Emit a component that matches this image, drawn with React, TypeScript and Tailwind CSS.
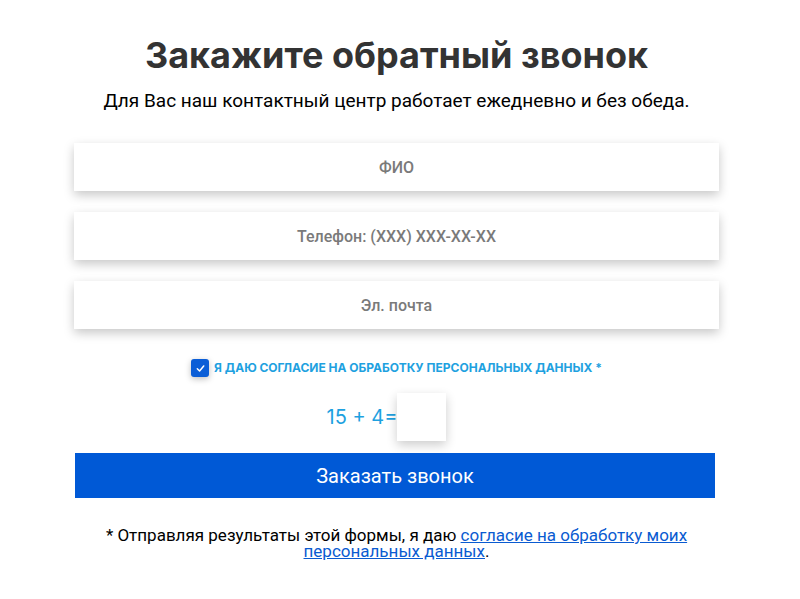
export default function App() {
  return (
    <div className="min-h-[599px] bg-white">
      <div className="mx-0 flex w-[793px] flex-col items-center pt-[33px]">
        <h1 className="text-[36px] font-bold leading-[44px] text-[#333333] [font-family:Inter,'Noto_Sans',sans-serif]">
          Закажите обратный звонок
        </h1>
        <p className="mt-[12px] text-[19px] leading-[24px] text-black [font-family:Roboto,'Noto_Sans',sans-serif]">
          Для Вас наш контактный центр работает ежедневно и без обеда.
        </p>

        <form className="mt-[30px] flex w-[645px] flex-col gap-[21px]">
          {["ФИО", "Телефон: (XXX) XXX-XX-XX", "Эл. почта"].map((ph) => (
            <input
              key={ph}
              placeholder={ph}
              className="h-[48px] w-full bg-white text-center text-[16px] font-medium text-[#555] shadow-[0_4px_10px_rgba(0,0,0,0.22)] outline-none placeholder:text-[#7a7a7a] [font-family:Roboto,sans-serif]"
            />
          ))}
        </form>

        <label className="mt-[30px] flex items-center gap-[5px]">
          <span className="flex h-[18px] w-[18px] items-center justify-center rounded-[3px] bg-[#0b5ed7] shadow-[0_2px_6px_rgba(0,0,0,0.25)]">
            <svg width="11" height="11" viewBox="0 0 12 12" fill="none">
              <path d="M2.5 6.3L5 8.8L9.5 3.2" stroke="white" strokeWidth="1.6" strokeLinecap="round" strokeLinejoin="round" />
            </svg>
          </span>
          <span className="text-[12px] font-bold uppercase leading-none text-[#1ea1e0] [font-family:Inter,sans-serif]">
            Я даю согласие на обработку персональных данных *
          </span>
        </label>

        <div className="mr-[20px] mt-[16px] flex items-center">
          <span className="text-[20px] leading-none text-[#1ea1e0] [font-family:Inter,sans-serif]">15 + 4=</span>
          <div className="h-[48px] w-[49px] bg-white shadow-[0_4px_10px_rgba(0,0,0,0.2)]" />
        </div>

        <button className="mr-[3px] mt-[12px] h-[45px] w-[640px] bg-[#0059d6] text-[20px] text-white [font-family:Roboto,sans-serif]">
          Заказать звонок
        </button>

        <p className="mt-[29px] w-[600px] text-center text-[17px] leading-[16px] text-black [font-family:Roboto,sans-serif]">
          * Отправляя результаты этой формы, я даю{" "}
          <a href="#" className="text-[#0a5bd1] underline">
            согласие на обработку моих персональных данных
          </a>
          .
        </p>
      </div>
    </div>
  );
}
